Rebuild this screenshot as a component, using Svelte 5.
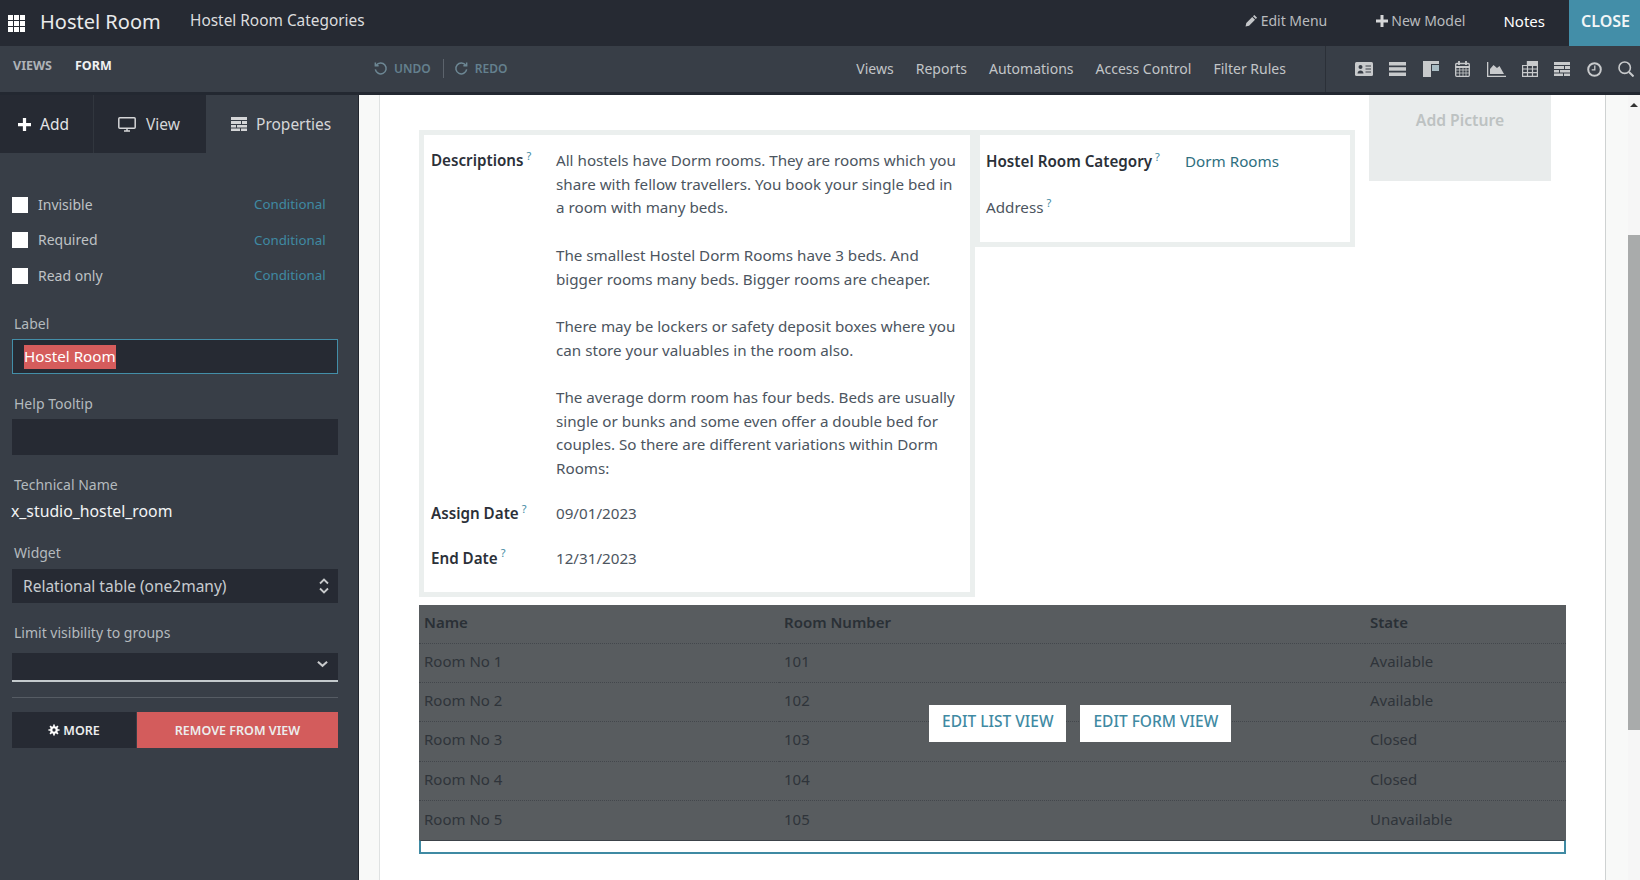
<script>
  const navLinks = ['Views', 'Reports', 'Automations', 'Access Control', 'Filter Rules'];
  const flags = ['Invisible', 'Required', 'Read only'];
  const rooms = [
    { name: 'Room No 1', number: 101, state: 'Available' },
    { name: 'Room No 2', number: 102, state: 'Available' },
    { name: 'Room No 3', number: 103, state: 'Closed' },
    { name: 'Room No 4', number: 104, state: 'Closed' },
    { name: 'Room No 5', number: 105, state: 'Unavailable' }
  ];
</script>

<div class="app">
  <header class="topbar">
    <svg class="apps" viewBox="0 0 17 17" width="17" height="17" fill="#fff">
      <rect width="5" height="5" /><rect x="6" width="5" height="5" /><rect x="12" width="5" height="5" />
      <rect y="6" width="5" height="5" /><rect x="6" y="6" width="5" height="5" /><rect x="12" y="6" width="5" height="5" />
      <rect y="12" width="5" height="5" /><rect x="6" y="12" width="5" height="5" /><rect x="12" y="12" width="5" height="5" />
    </svg>
    <span class="brand">Hostel Room</span>
    <span class="menu">Hostel Room Categories</span>
    <div class="top-right">
      <span class="top-link edit">
        <svg viewBox="0 0 14 14" width="13" height="13" fill="#c4c6c9"><path d="M10 1l3 3-1.4 1.4-3-3zM7.8 3.2l3 3L4.4 12.6 0.6 13.4l.8-3.8z" /></svg>
        Edit Menu
      </span>
      <span class="top-link model">
        <svg viewBox="0 0 12 12" width="12" height="12" fill="#d5d6d8"><path d="M4.500 0h3v4.500H12v3H7.500V12h-3V7.500H0v-3h4.500z" /></svg>
        New Model
      </span>
      <span class="notes">Notes</span>
      <span class="close"><span>CLOSE</span></span>
    </div>
  </header>

  <div class="subbar">
    <div class="crumbs"><span>VIEWS</span><b>FORM</b></div>
    <div class="history">
      <svg viewBox="0 0 16 16" width="15" height="15" fill="none" stroke="#6d8794" stroke-width="1.600"><path d="M3.500 4.500A5.800 5.800 0 1 1 2.500 9" /><path d="M2.500 1.500v3.500h3.500" /></svg>
      <span>UNDO</span>
      <i></i>
      <svg viewBox="0 0 16 16" width="15" height="15" fill="none" stroke="#6d8794" stroke-width="1.600"><path d="M12.500 4.500A5.800 5.800 0 1 0 13.500 9" /><path d="M13.500 1.500v3.500H10" /></svg>
      <span>REDO</span>
    </div>
    <nav class="nav">
      {#each navLinks as link}
        <span>{link}</span>
      {/each}
    </nav>
    <div class="views">
      <svg viewBox="0 0 18 14" width="18" height="14"><rect width="18" height="14" rx="1.500" fill="#c8cacc" /><circle cx="5.500" cy="5" r="2" fill="#383e47" /><path d="M2.500 11.500c0-4 6-4 6 0z" fill="#383e47" /><path d="M10.500 4h5.500M10.500 7h5.500M10.500 10h5.500" stroke="#383e47" stroke-width="1.200" /></svg>
      <svg viewBox="0 0 17 14" width="17" height="14" fill="#c8cacc"><rect width="17" height="3.500" /><rect y="5.200" width="17" height="3.500" /><rect y="10.500" width="17" height="3.500" /></svg>
      <svg viewBox="0 0 16 16" width="16" height="16" fill="#c8cacc"><rect width="16" height="3" /><rect y="3" width="8" height="13" /><rect x="9" y="4" width="7" height="6" fill="#a9bcc4" /></svg>
      <svg viewBox="0 0 15 16" width="15" height="16" fill="none" stroke="#c8cacc" stroke-width="1.300"><rect x=".7" y="2.500" width="13.600" height="12.800" rx="1" /><path d="M.7 6h13.600M4 0v4M11 0v4" stroke-width="1.800" /><path d="M.7 9h13.600M.7 12h13.600M4.700 6v9M8 6v9M11 6v9" stroke-width=".8" /></svg>
      <svg viewBox="0 0 19 15" width="19" height="15" fill="#c8cacc"><path d="M0 0h1.300v13.700H19V15H0z" /><path d="M3 12V7l3.500-4 3.500 3 2.500-2 4.500 8z" /></svg>
      <svg viewBox="0 0 16 16" width="16" height="16" fill="none" stroke="#c8cacc" stroke-width="1.200"><path d="M5.500 .6h9.900v14.800H.6V4.500h4.900z" /><path d="M5.500 .6h9.900v3.900H5.500z" fill="#c8cacc" /><path d="M.6 8h14.800M.6 11.700h14.800M5.500 4.500v11M10.500 4.500v11" /></svg>
      <svg viewBox="0 0 16 14" width="16" height="14" fill="#c8cacc"><rect width="16" height="3" /><rect y="4" width="10" height="3" /><rect x="11" y="4" width="5" height="3" /><rect y="8" width="5" height="2.500" /><rect x="6" y="8" width="10" height="2.500" /><rect y="11.500" width="9" height="2.500" /><rect x="10" y="11.500" width="6" height="2.500" /></svg>
      <svg viewBox="0 0 15 15" width="15" height="15" fill="none" stroke="#c8cacc" stroke-width="2"><circle cx="7.500" cy="7.500" r="6.300" /><path d="M7.800 3.500v4.300H4.700" stroke-width="1.300" /></svg>
      <svg viewBox="0 0 16 16" width="16" height="16" fill="none" stroke="#c8cacc" stroke-width="1.600"><circle cx="6.700" cy="6.700" r="5.700" /><path d="M11 11l4.500 4.500" stroke-width="2" /></svg>
    </div>
  </div>

  <div class="body">
    <aside class="sidebar">
      <div class="tabs">
        <div class="tab add">
          <svg viewBox="0 0 12 12" width="13" height="13" fill="#fff"><path d="M4.500 0h3v4.500H12v3H7.500V12h-3V7.500H0v-3h4.500z" /></svg>
          Add
        </div>
        <div class="tab view">
          <svg viewBox="0 0 18 15" width="18" height="15" fill="none" stroke="#d5d6d8" stroke-width="1.500"><rect x=".8" y=".8" width="16.400" height="10.400" rx="1" /><path d="M6 14h6M9 11v3" /></svg>
          View
        </div>
        <div class="tab props">
          <svg viewBox="0 0 16 14" width="16" height="14" fill="#d5d6d8"><rect width="16" height="3" /><rect y="4" width="10" height="3" /><rect x="11" y="4" width="5" height="3" /><rect y="8" width="5" height="2.500" /><rect x="6" y="8" width="10" height="2.500" /><rect y="11.500" width="9" height="2.500" /><rect x="10" y="11.500" width="6" height="2.500" /></svg>
          Properties
        </div>
      </div>

      <div class="flags">
        {#each flags as flag}
          <div class="flag">
            <span class="box"></span>
            <span class="flag-name">{flag}</span>
            <span class="conditional">Conditional</span>
          </div>
        {/each}
      </div>

      <div class="fields">
        <label class="caption" for="label-field">Label</label>
        <div class="input focused" id="label-field"><span class="selected">Hostel Room</span></div>

        <div class="caption">Help Tooltip</div>
        <div class="input tip"></div>

        <div class="caption">Technical Name</div>
        <div class="tech">x_studio_hostel_room</div>

        <div class="caption widget">Widget</div>
        <div class="input select">
          <span>Relational table (one2many)</span>
          <svg viewBox="0 0 10 16" width="10" height="16" fill="none" stroke="#c8cacc" stroke-width="1.800"><path d="M1 5.500L5 1.500l4 4M1 10.500l4 4 4-4" /></svg>
        </div>

        <div class="caption">Limit visibility to groups</div>
        <div class="input groups">
          <svg viewBox="0 0 12 8" width="11" height="8" fill="none" stroke="#c8cacc" stroke-width="2.200"><path d="M1 1.500l5 4.500 5-4.500" /></svg>
        </div>

        <div class="rule"></div>

        <div class="actions">
          <button class="more">
            <svg viewBox="0 0 14 14" width="12" height="12"><path d="M7 .5v13M.5 7h13M2.400 2.400l9.200 9.200M11.600 2.400l-9.200 9.200" stroke="#fff" stroke-width="2" /><circle cx="7" cy="7" r="4.400" fill="#fff" /><circle cx="7" cy="7" r="1.900" fill="#262a33" /></svg>
            MORE
          </button>
          <button class="remove">REMOVE FROM VIEW</button>
        </div>
      </div>
    </aside>

    <div class="gutter"></div>

    <main class="sheet">
      <div class="top-row">
        <section class="group main-group">
          <div class="field long">
            <span class="name">Descriptions<sup>?</sup></span>
            <div class="text">
              <p>All hostels have Dorm rooms. They are rooms which you<br />share with fellow travellers. You book your single bed in<br />a room with many beds.</p>
              <p>The smallest Hostel Dorm Rooms have 3 beds. And<br />bigger rooms many beds. Bigger rooms are cheaper.</p>
              <p>There may be lockers or safety deposit boxes where you<br />can store your valuables in the room also.</p>
              <p>The average dorm room has four beds. Beds are usually<br />single or bunks and some even offer a double bed for<br />couples. So there are different variations within Dorm<br />Rooms:</p>
            </div>
          </div>
          <div class="field date">
            <span class="name">Assign Date<sup>?</sup></span>
            <div class="text">09/01/2023</div>
          </div>
          <div class="field date">
            <span class="name">End Date<sup>?</sup></span>
            <div class="text">12/31/2023</div>
          </div>
        </section>

        <section class="group side-group">
          <div class="side-field">
            <span class="name">Hostel Room Category<sup>?</sup></span>
            <span class="value">Dorm Rooms</span>
          </div>
          <div class="address">Address<sup>?</sup></div>
        </section>

        <div class="picture">Add Picture</div>
      </div>

      <div class="rooms">
        <table>
          <thead>
            <tr><th>Name</th><th>Room Number</th><th>State</th></tr>
          </thead>
          <tbody>
            {#each rooms as room}
              <tr><td>{room.name}</td><td>{room.number}</td><td>{room.state}</td></tr>
            {/each}
          </tbody>
        </table>
        <div class="blank"></div>
        <div class="overlay">
          <button>EDIT LIST VIEW</button>
          <button>EDIT FORM VIEW</button>
        </div>
      </div>
    </main>

    <div class="right-gutter"></div>
    <div class="scrollbar">
      <span class="arrow"></span>
      <span class="thumb"></span>
    </div>
  </div>
</div>

<style>
  :global(body) {
    margin: 0;
    overflow: hidden;
    background: #fff;
  }

  .app {
    width: 1640px;
    height: 880px;
    overflow: hidden;
    display: flex;
    flex-direction: column;
    font-family: 'Noto Sans', sans-serif;
    font-size: 15.200px;
    color: #4c5560;
  }

  .topbar {
    height: 46px;
    flex: none;
    display: flex;
    align-items: center;
    background: #262a33;
    color: #d5d6d8;
    padding-left: 8px;
  }

  .brand {
    margin-left: 15px;
    font-size: 20px;
    width: 150px;
    color: #e9eaeb;
    padding-bottom: 4px;
  }

  .menu {
    font-size: 15.400px;
    color: #dcdddf;
    padding-bottom: 5px;
  }

  .top-right {
    margin-left: auto;
    display: flex;
    align-items: center;
    height: 100%;
  }

  .top-link {
    display: flex;
    align-items: center;
    gap: 3px;
    font-size: 14px;
    color: #b9bbbe;
    padding-bottom: 5px;
  }

  .model {
    margin-left: 49px;
  }

  .notes {
    margin-left: 38px;
    color: #fff;
    font-size: 15px;
    padding-bottom: 5px;
  }

  .close {
    margin-left: 24px;
    width: 71px;
    height: 100%;
    display: flex;
    align-items: center;
    justify-content: center;
    background: #438ea8;
    color: #f2f6f7;
    font-weight: 600;
    font-size: 16px;
  }

  .close span {
    padding: 0 0 5px 2px;
  }

  .subbar {
    height: 46px;
    flex: none;
    box-sizing: content-box;
    display: flex;
    align-items: center;
    background: #383e47;
    border-bottom: 3px solid #232831;
    color: #c8cacc;
  }

  .crumbs {
    width: 373px;
    padding-left: 13px;
    box-sizing: border-box;
    display: flex;
    gap: 23px;
    font-size: 12.500px;
    font-weight: 700;
    color: #aeb2b7;
    margin-top: -8px;
  }

  .crumbs b {
    color: #f0f1f2;
    font-weight: 700;
  }

  .history {
    display: flex;
    align-items: center;
    gap: 6px;
    font-size: 12px;
    font-weight: 600;
    color: #64808e;
    margin-top: -2px;
  }

  .history i {
    width: 1px;
    height: 19px;
    background: #5c636c;
    margin: 0 4px 0 6px;
  }

  .nav {
    margin-left: 349px;
    display: flex;
    gap: 22px;
    font-size: 14px;
    color: #c2c5c8;
    margin-top: -1px;
  }

  .views {
    position: absolute;
    left: 1325px;
    top: 46px;
    height: 46px;
    width: 315px;
    box-sizing: border-box;
    padding: 0 6px 0 29px;
    display: flex;
    align-items: center;
    justify-content: space-between;
    border-left: 1px solid #2b3038;
  }

  .body {
    flex: 1;
    display: flex;
    min-height: 0;
  }

  .sidebar {
    width: 358px;
    flex: none;
    background: #383e47;
    border-right: 1px solid #22262e;
    color: #c0c4c8;
  }

  .tabs {
    display: flex;
    height: 58px;
    font-size: 15.500px;
  }

  .tab {
    display: flex;
    align-items: center;
    gap: 9px;
    box-sizing: border-box;
  }

  .add {
    width: 94px;
    padding-left: 18px;
    background: #262a33;
    color: #e4e5e7;
    border-right: 1px solid #31363e;
  }

  .view {
    width: 112px;
    padding-left: 24px;
    gap: 10px;
    background: #262a33;
    color: #d5d6d8;
  }

  .props {
    padding-left: 25px;
    color: #d5d6d8;
  }

  .flags {
    padding: 34px 0 .5px 12px;
  }

  .flag {
    display: flex;
    align-items: center;
    height: 35.500px;
    font-size: 14px;
  }

  .flag-name {
    width: 216px;
    color: #bfc2c5;
    padding-bottom: 1px;
  }

  .box {
    width: 16px;
    height: 16px;
    background: #fff;
    margin-right: 10px;
  }

  .conditional {
    font-size: 13.300px;
    color: #3f8aa3;
    padding-bottom: 1px;
  }

  .fields {
    padding: 0 20px 0 12px;
    display: flex;
    flex-direction: column;
  }

  .caption {
    display: block;
    height: 20px;
    line-height: 20px;
    font-size: 14px;
    padding-left: 2px;
    margin-top: 20px;
    color: #b4babe;
  }

  .caption.widget {
    margin-top: 22px;
  }

  .input {
    box-sizing: border-box;
    height: 36px;
    margin-top: 5px;
    background: #262a33;
    display: flex;
    align-items: center;
    padding: 0 12px 0 11px;
    font-size: 15.500px;
    color: #c8ccd0;
  }

  .focused {
    height: 35px;
    border: 1px solid #438ea8;
    padding-left: 11px;
  }

  .selected {
    background: #d55c5c;
    color: #fff;
    height: 24px;
    line-height: 23px;
    font-size: 15.200px;
  }

  .tech {
    font-size: 15.800px;
    color: #f3f4f5;
    margin-top: 6px;
    height: 20px;
    line-height: 20px;
    margin-left: -1px;
  }

  .select {
    justify-content: space-between;
    height: 34px;
    margin-top: 6px;
    padding-right: 9px;
  }

  .groups {
    height: 29px;
    border-bottom: 2px solid #c4cacd;
    justify-content: flex-end;
    align-items: flex-start;
    padding: 7px 10px 0 0;
    margin-top: 10px;
  }

  .rule {
    height: 1px;
    background: #565c64;
    margin: 15px 0 14px;
  }

  .actions {
    display: flex;
    gap: 1px;
    height: 36px;
  }

  .actions button {
    border: 0;
    font-family: inherit;
    font-size: 12.500px;
    font-weight: 600;
    color: #eceded;
    padding: 0;
    display: flex;
    align-items: center;
    justify-content: center;
    gap: 3px;
  }

  .more {
    width: 124px;
    background: #262a33;
  }

  .remove {
    flex: 1;
    background: #d35c5c;
  }

  .gutter {
    width: 21px;
    flex: none;
    background: #f8f9f8;
    border-right: 1px solid #dfe2e2;
    box-sizing: border-box;
  }

  .sheet {
    width: 1225px;
    flex: none;
    background: #fff;
    padding-left: 39px;
    box-sizing: border-box;
  }

  .top-row {
    display: flex;
    align-items: flex-start;
    height: 502px;
  }

  .group {
    box-sizing: border-box;
    border: 5px solid #ebefee;
    margin-top: 35px;
    background: #fff;
  }

  .main-group {
    width: 556px;
    height: 467px;
    padding: 14px 0 0 7px;
    display: flex;
    flex-direction: column;
    gap: 21px;
  }

  .field {
    display: grid;
    grid-template-columns: 125px 1fr;
  }

  .name {
    font-weight: 600;
    color: #2b3038;
    line-height: 23.700px;
  }

  sup {
    font-size: 11px;
    font-weight: 400;
    color: #3f8aa3;
    margin-left: 3px;
    line-height: 0;
  }

  .text {
    line-height: 23.700px;
    white-space: nowrap;
    color: #4c5560;
  }

  .text p {
    margin: 0 0 23.700px;
  }

  .text p:last-child {
    margin: 0;
  }

  .side-group {
    width: 380px;
    height: 117px;
    padding: 15px 0 0 6px;
  }

  .side-field {
    display: grid;
    grid-template-columns: 199px 1fr;
    line-height: 23.700px;
  }

  .value {
    color: #2f6f80;
  }

  .address {
    margin-top: 22px;
    line-height: 23.700px;
    color: #4c5560;
  }

  .picture {
    margin-left: 14px;
    width: 182px;
    height: 86px;
    background: #e9ecec;
    color: #bdc2c2;
    font-weight: 600;
    font-size: 15.700px;
    text-align: center;
    padding-top: 15px;
    box-sizing: border-box;
    line-height: 20px;
  }

  .rooms {
    position: relative;
    width: 1147px;
    margin-top: 8px;
  }

  table {
    width: 100%;
    height: 235px;
    border-collapse: collapse;
    table-layout: fixed;
    background: #585c5f;
    color: #2f343a;
  }

  th, td {
    box-sizing: border-box;
    text-align: left;
    padding: 0 0 4px 5px;
    font-weight: 400;
    font-size: 15px;
    height: 39.400px;
    border-bottom: 1px dotted #43474c;
  }

  tr:last-child td {
    border-bottom: 0;
  }

  th {
    height: 38px;
    font-weight: 600;
    color: #2a3036;
  }

  th:nth-child(1) { width: 360px; }
  th:nth-child(2) { width: 586px; }

  .blank {
    height: 14px;
    box-sizing: border-box;
    border: 2px solid #3f8aa3;
    border-top: 1px solid #3c4249;
    background: #fff;
  }

  .overlay {
    position: absolute;
    left: 510px;
    top: 100px;
    display: flex;
    gap: 14px;
  }

  .overlay button {
    height: 37px;
    border: 0;
    background: #fff;
    color: #3f8aa3;
    font-family: inherit;
    font-size: 15.500px;
    font-weight: 500;
    padding: 0 13px 5px;
  }

  .right-gutter {
    width: 23px;
    flex: none;
    background: #f8f9f8;
    border-left: 1px solid #cfd2d2;
    box-sizing: border-box;
  }

  .scrollbar {
    width: 12px;
    flex: none;
    background: #f6f6f6;
    display: flex;
    flex-direction: column;
    align-items: center;
  }

  .arrow {
    margin-top: 8px;
    border-left: 4px solid transparent;
    border-right: 4px solid transparent;
    border-bottom: 4px solid #333;
  }

  .thumb {
    width: 100%;
    height: 495px;
    margin-top: 128px;
    background: #a9abab;
  }
</style>
